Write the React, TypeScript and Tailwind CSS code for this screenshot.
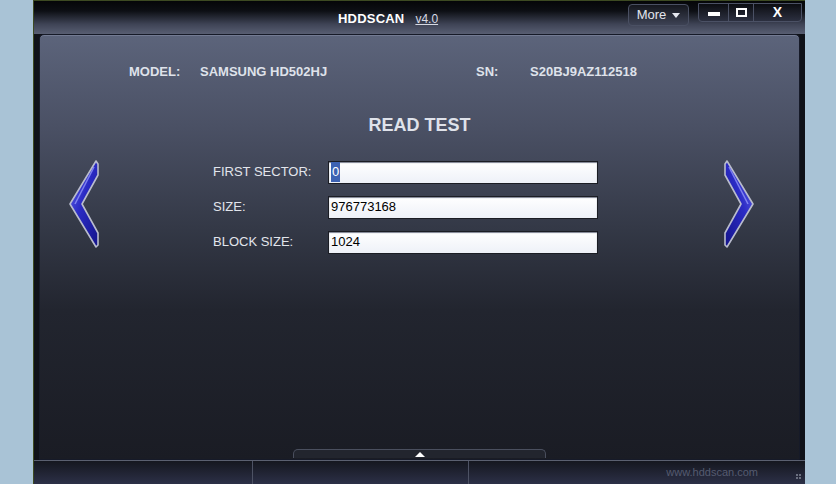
import React from "react";

const fields = [
  { label: "FIRST SECTOR:", value: "0", selected: true },
  { label: "SIZE:", value: "976773168" },
  { label: "BLOCK SIZE:", value: "1024" },
];

function Chevron({ dir }: { dir: "left" | "right" }) {
  const id = `chev-${dir}`;
  return (
    <svg
      width="30"
      height="90"
      viewBox="0 0 30 90"
      className={dir === "right" ? "-scale-x-100" : ""}
    >
      <defs>
        <linearGradient id={id} x1="0" y1="0" x2="1" y2="1">
          <stop offset="0" stopColor="#6a6cf0" />
          <stop offset="0.45" stopColor="#2b2bc4" />
          <stop offset="1" stopColor="#14148a" />
        </linearGradient>
      </defs>
      <polygon
        points="27,2 29,5 29,16 13,45 29,74 29,86 27,88 1,45"
        fill={`url(#${id})`}
        stroke="#b9bccd"
        strokeWidth="1.6"
        strokeLinejoin="round"
      />
      <polyline points="25,8 6,45" stroke="#9ea2ff" strokeWidth="1.5" fill="none" opacity="0.7" />
    </svg>
  );
}

export default function App() {
  return (
    <div
      className="flex h-[484px] w-[836px] overflow-hidden bg-[#a9c3d6] pl-[33px] pr-[31px]"
      style={{ fontFamily: '"Liberation Sans", Arial, sans-serif' }}
    >
      <div className="flex flex-1 flex-col border-l border-t border-[#3d4a22] bg-[#0f1118]">
        {/* Title bar */}
        <div className="relative flex h-[33px] shrink-0 items-start bg-[linear-gradient(to_bottom,#050608_0%,#0d0f14_30%,#3e4355_70%,#585e72_100%)] pt-[8px]">
          <div className="ml-[304px] flex items-baseline gap-[11px]">
            <span className="text-[13px] font-bold tracking-[0.2px] text-white">HDDSCAN</span>
            <span className="text-[12px] text-[#d7dae4] underline">v4.0</span>
          </div>
          <div className="absolute left-[594px] top-[3px] flex h-[22px] w-[61px] items-center justify-center gap-[6px] rounded-[4px] border border-[#4a5063] bg-[linear-gradient(to_bottom,#15171e,#3d4254)] text-[13px] text-[#e3e5ec]">
            More
            <span className="mt-[1px] border-x-[4px] border-t-[5px] border-x-transparent border-t-[#e6e8ef]" />
          </div>
          <div className="absolute left-[664px] top-[2px] flex h-[19px] w-[104px] overflow-hidden rounded-b-[4px] border border-[#4b5165] bg-[linear-gradient(to_bottom,#0c0d12,#2c3040)]">
            <div className="flex w-[30px] items-center justify-center border-r border-[#4b5165]">
              <span className="mt-[3px] h-[4px] w-[12px] bg-white" />
            </div>
            <div className="flex w-[25px] items-center justify-center border-r border-[#4b5165]">
              <span className="h-[9px] w-[11px] border-2 border-white" />
            </div>
            <div className="flex flex-1 items-center justify-center text-[14px] font-bold text-white">X</div>
          </div>
        </div>

        {/* Main panel */}
        <div className="relative mx-[5px] flex flex-1 flex-col items-center rounded-t-[5px] border border-[#161a28] bg-[linear-gradient(to_bottom,#5c647b_0%,#4a5064_22%,#343947_45%,#22252f_65%,#1a1c24_100%)] shadow-[inset_0_1px_0_#737b93]">
          <div className="mt-[27px] flex w-full text-[13px] font-bold text-[#dfe2ea]">
            <span className="ml-[89px] w-[71px]">MODEL:</span>
            <span className="w-[276px]">SAMSUNG HD502HJ</span>
            <span className="w-[54px]">SN:</span>
            <span>S20BJ9AZ112518</span>
          </div>
          <div className="mt-[30px] text-[18px] font-bold text-[#dfe2ea]">READ TEST</div>

          <div className="mt-[25px] flex w-full items-center pl-[29px]">
            <div className="-mt-[10px]">
              <Chevron dir="left" />
            </div>
            <div className="ml-[114px] -mt-[3px] flex flex-col gap-[12px]">
              {fields.map((f) => (
                <div key={f.label} className="flex items-center">
                  <span className="w-[115px] text-[13px] text-[#e2e5ec]">{f.label}</span>
                  <div className="flex h-[23px] w-[270px] items-center border border-[#1b1d24] bg-[linear-gradient(to_bottom,#ffffff,#eef1f8)] px-[2px] text-[13px] text-black shadow-[inset_0_1px_1px_#7c8090]">
                    {f.selected ? (
                      <span className="bg-[#3d62b3] px-[1px] text-white">{f.value}</span>
                    ) : (
                      f.value
                    )}
                  </div>
                </div>
              ))}
            </div>
            <div className="ml-[126px] -mt-[10px]">
              <Chevron dir="right" />
            </div>
          </div>

          {/* bottom handle */}
          <div className="absolute bottom-[1px] left-[253px] flex h-[9px] w-[253px] items-start justify-center rounded-t-[5px] border border-b-0 border-[#4a4f5e] bg-[#22252e]">
            <span className="mt-[2px] border-x-[5px] border-b-[5px] border-x-transparent border-b-white" />
          </div>
        </div>

        {/* Status bar */}
        <div className="flex h-[24px] shrink-0 items-center border-t border-[#5b6070] bg-[linear-gradient(to_bottom,#15171f,#2c3047_100%)] text-[11px]">
          <div className="h-full w-[219px] border-r border-[#4d5264]" />
          <div className="h-full w-[216px] border-r border-[#4d5264]" />
          <div className="flex flex-1 items-center justify-end pr-[38px] text-[#555b70]">www.hddscan.com</div>
          <div className="mr-[4px] mt-[8px] grid grid-cols-2 gap-[1px]">
            <span className="h-[2px] w-[2px] bg-[#6b7080]" />
            <span className="h-[2px] w-[2px] bg-[#6b7080]" />
            <span className="h-[2px] w-[2px] bg-[#6b7080]" />
            <span className="h-[2px] w-[2px] bg-[#6b7080]" />
          </div>
        </div>
      </div>
    </div>
  );
}
